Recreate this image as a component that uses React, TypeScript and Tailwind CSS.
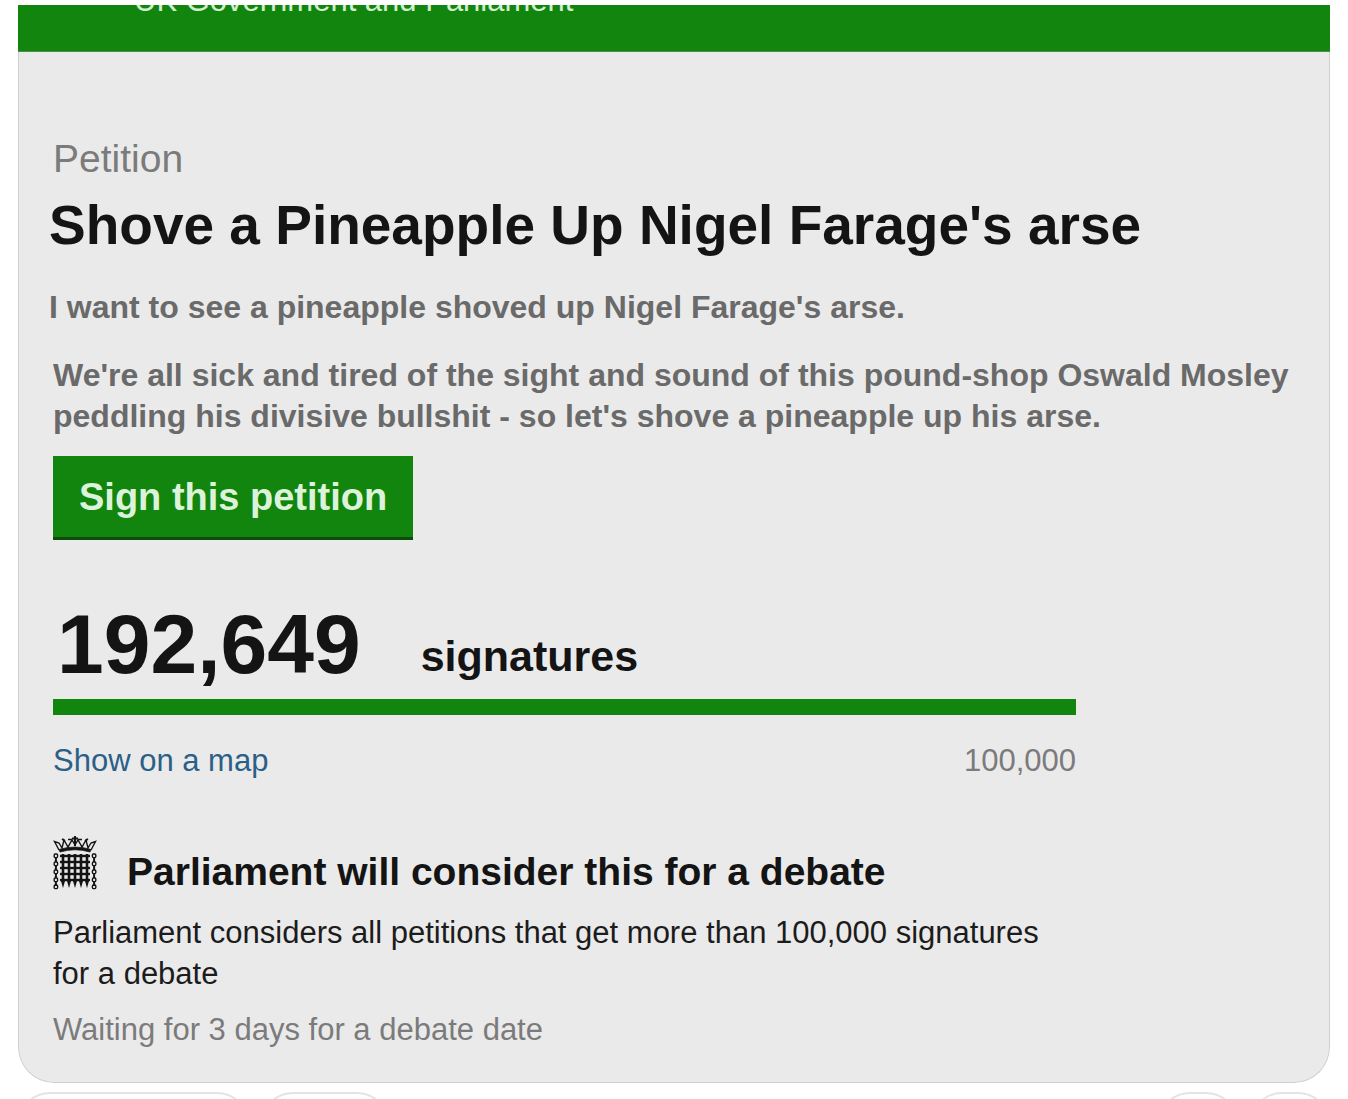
import React from 'react';

const SIGNATURES = 192649;
const TARGET = 100000;

const formatCount = (n: number) => n.toLocaleString('en-GB');

const Portcullis: React.FC = () => {
  const bars = [10, 16, 22, 28, 34];
  const rows = [20, 26, 32, 38, 44];
  const links = [18, 26, 34, 42, 49];
  const joins = [23, 31, 39, 47];

  return (
    <svg viewBox="0 0 44 54" className="h-[54px] w-[44px] shrink-0" fill="none" stroke="#141414" aria-hidden="true">
      {/* crown */}
      <path d="M6 13.5 Q22 8.5 38 13.5 L37 16 Q22 11.5 7 16 Z" fill="#141414" strokeWidth="0.8" />
      <path d="M6 14 L1.5 5.5 L6 7 L9 12 L11 4 L15 11 L19 4 L22 9 L25 4 L29 11 L33 4 L35 12 L38 7 L42.5 5.5 L38 14" strokeWidth="1.4" />
      <path d="M9 3 L12 5 M35 3 L32 5 M15 3.5 H19 M25 3.5 H29" strokeWidth="1.6" />
      <path d="M22 0 V10 M19 2.5 H25" strokeWidth="2" />

      {/* grille */}
      {bars.map((x) => (
        <g key={x}>
          <path d={`M${x} 18 V46`} strokeWidth="2.6" />
          <path d={`M${x - 2} 45 H${x + 2} L${x} 52 Z`} fill="#141414" stroke="none" />
        </g>
      ))}
      {rows.map((y) => (
        <path key={y} d={`M7 ${y} H37`} strokeWidth="2.4" />
      ))}

      {/* chains */}
      {links.map((y) => (
        <g key={y} strokeWidth="1.4">
          <rect x="1.2" y={y} width="3.4" height="3.6" rx="1" />
          <rect x="39.4" y={y} width="3.4" height="3.6" rx="1" />
        </g>
      ))}
      {joins.map((y) => (
        <path key={y} d={`M2.9 ${y - 1} V${y + 3} M41.1 ${y - 1} V${y + 3}`} strokeWidth="2" />
      ))}
    </svg>
  );
};

const PetitionCard: React.FC = () => (
  <article className="overflow-hidden rounded-b-[36px] bg-[#eaeaea]">
    <header className="h-[47px] overflow-hidden border-b border-[#4f8a48] bg-[#12850f] pl-[116px]">
      <p className="-mt-6 text-[31px] leading-[40px] text-[#d3f0d0]">UK Government and Parliament</p>
    </header>

    <div className="rounded-b-[36px] border border-t-0 border-[#cfcfcf] px-[34px] pt-[85px] pb-8 text-[31px] leading-[41px]">
      <p className="text-[39px] leading-[44px] text-[#7b7b7b]">Petition</p>
      <div className="-ml-1">
        <h1 className="mt-3 text-[55px] leading-[64px] font-bold text-[#141414]">
          Shove a Pineapple Up Nigel Farage's arse
        </h1>
        <p className="mt-[30px] text-[32px] font-bold text-[#6a6a6a]">
          I want to see a pineapple shoved up Nigel Farage's arse.
        </p>
      </div>
      <p className="mt-[27px] -mr-6 text-[32px] font-bold text-[#6a6a6a]">
        We're all sick and tired of the sight and sound of this pound-shop Oswald Mosley
        peddling his divisive bullshit - so let's shove a pineapple up his arse.
      </p>

      <button
        type="button"
        className="mt-[19px] block h-[84px] border-b-3 border-[#0b4d0a] bg-[#12850f] px-[26px] text-[38px] leading-[44px] font-bold text-[#dcf3da]"
      >
        Sign this petition
      </button>

      <section className="mt-[60px] max-w-[1023px]">
        <p className="flex items-end gap-[60px] pl-1 font-bold text-[#141414]">
          <span className="text-[84px] leading-[88px]">{formatCount(SIGNATURES)}</span>
          <span className="text-[43px] leading-[64px]">signatures</span>
        </p>
        <div className="mt-[11px] h-4">
          <div
            className="h-full bg-[#12850f]"
            style={{ width: `${Math.min(100, (SIGNATURES / TARGET) * 100)}%` }}
          />
        </div>
        <div className="mt-[25px] flex justify-between">
          <a href="#map" className="text-[#2b5f87]">Show on a map</a>
          <span className="text-[#7b7b7b]">{formatCount(TARGET)}</span>
        </div>
      </section>

      <section className="mt-[55px] max-w-[1023px]">
        <div className="flex items-start gap-[30px]">
          <Portcullis />
          <h2 className="mt-[14px] text-[39px] leading-[44px] font-bold text-[#141414]">
            Parliament will consider this for a debate
          </h2>
        </div>
        <p className="mt-[18px] text-[#1c1c1c]">
          Parliament considers all petitions that get more than 100,000 signatures for a debate
        </p>
        <p className="mt-[15px] text-[#7b7b7b]">Waiting for 3 days for a debate date</p>
      </section>
    </div>
  </article>
);

const ActionPill: React.FC<{ className: string; label: string }> = ({ className, label }) => (
  <button
    type="button"
    aria-label={label}
    className={`h-16 rounded-full border-2 border-[#e4e4e4] bg-white ${className}`}
  />
);

export default function App() {
  return (
    <main className="bg-white px-[18px] pt-[5px] font-['Liberation_Sans',Arial,sans-serif]">
      <PetitionCard />
      <div className="mt-[9px] flex h-2 justify-between overflow-hidden">
        <div className="flex gap-3">
          <ActionPill className="w-[231px]" label="Vote" />
          <ActionPill className="w-[128px]" label="Comments" />
        </div>
        <div className="flex gap-3">
          <ActionPill className="w-20" label="Award" />
          <ActionPill className="w-20" label="Share" />
        </div>
      </div>
    </main>
  );
}
